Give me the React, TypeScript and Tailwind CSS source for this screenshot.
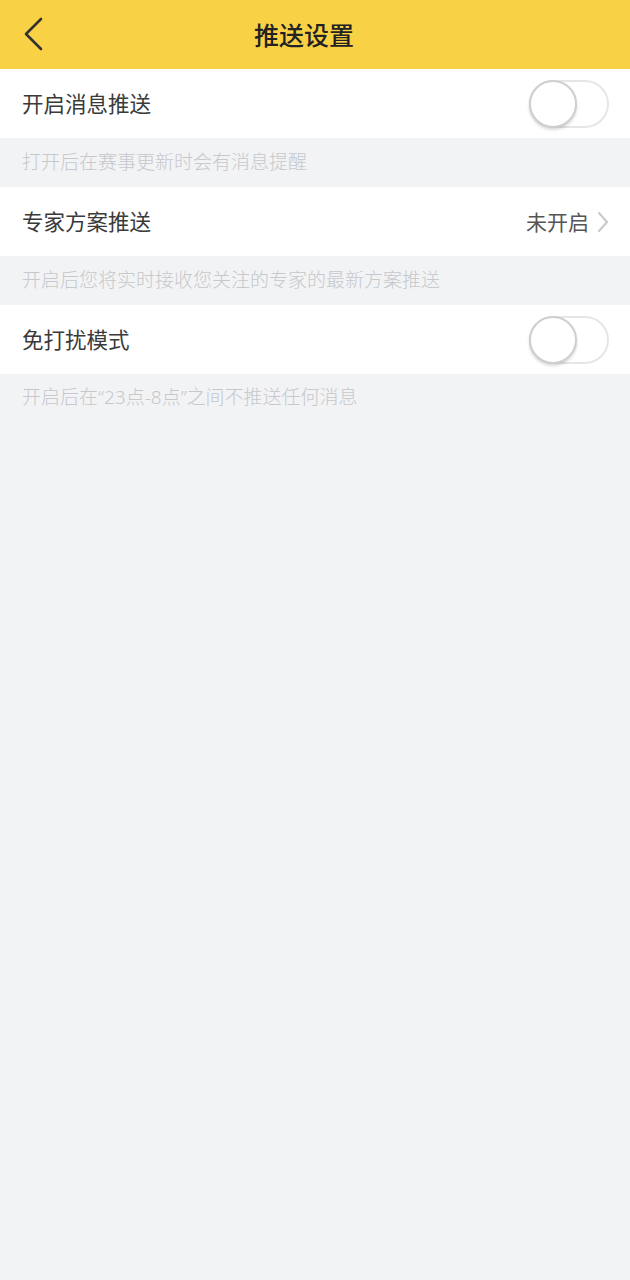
import React from "react";

function Toggle() {
  return (
    <div className="relative w-[80px] h-[48px] rounded-full border-2 border-[#e6e6e6] bg-white">
      <div className="absolute left-[-2px] top-[-2px] w-[48px] h-[48px] rounded-full bg-white border-2 border-[#cfcfcf] shadow-[0_2px_3px_rgba(0,0,0,0.15)]" />
    </div>
  );
}

function Row({ label, right }: { label: string; right: React.ReactNode }) {
  return (
    <div className="h-[69px] bg-white flex items-center justify-between pl-[22px] pr-[21px]">
      <span className="text-[21.5px] text-[#3a3a3a]">{label}</span>
      {right}
    </div>
  );
}

function Hint({ children }: { children: React.ReactNode }) {
  return (
    <div className="h-[49px] flex items-center pl-[22px] pb-[3px]">
      <span className="text-[19px] text-[#c6c8cc] font-light">{children}</span>
    </div>
  );
}

const latin = { fontFamily: '"Noto Sans", sans-serif' };

export default function App() {
  return (
    <div
      className="w-[630px] h-[1280px] bg-[#f2f3f5]"
      style={{ fontFamily: '"Noto Sans CJK SC", "Noto Sans", sans-serif' }}
    >
      <div className="h-[69px] bg-[#f9d145] relative flex items-center justify-center">
        <svg
          className="absolute left-[22px] top-[17px]"
          width="22"
          height="34"
          viewBox="0 0 22 34"
          fill="none"
        >
          <path d="M19 2 L4 17 L19 32" stroke="#333" strokeWidth="2.6" strokeLinecap="round" strokeLinejoin="round" />
        </svg>
        <span className="text-[25px] text-[#222] font-medium -ml-[22px]">推送设置</span>
      </div>
      <Row label="开启消息推送" right={<Toggle />} />
      <Hint>打开后在赛事更新时会有消息提醒</Hint>
      <Row
        label="专家方案推送"
        right={
          <div className="flex items-center gap-[8px]">
            <span className="text-[21px] text-[#555]">未开启</span>
            <svg width="12" height="22" viewBox="0 0 12 22" fill="none">
              <path d="M2 2 L10 11 L2 20" stroke="#c8c8c8" strokeWidth="2" strokeLinecap="round" strokeLinejoin="round" />
            </svg>
          </div>
        }
      />
      <Hint>开启后您将实时接收您关注的专家的最新方案推送</Hint>
      <Row label="免打扰模式" right={<Toggle />} />
      <Hint>
        开启后在<span style={latin}>“23</span>点<span style={latin}>-8</span>点<span style={latin}>”</span>之间不推送任何消息
      </Hint>
    </div>
  );
}
